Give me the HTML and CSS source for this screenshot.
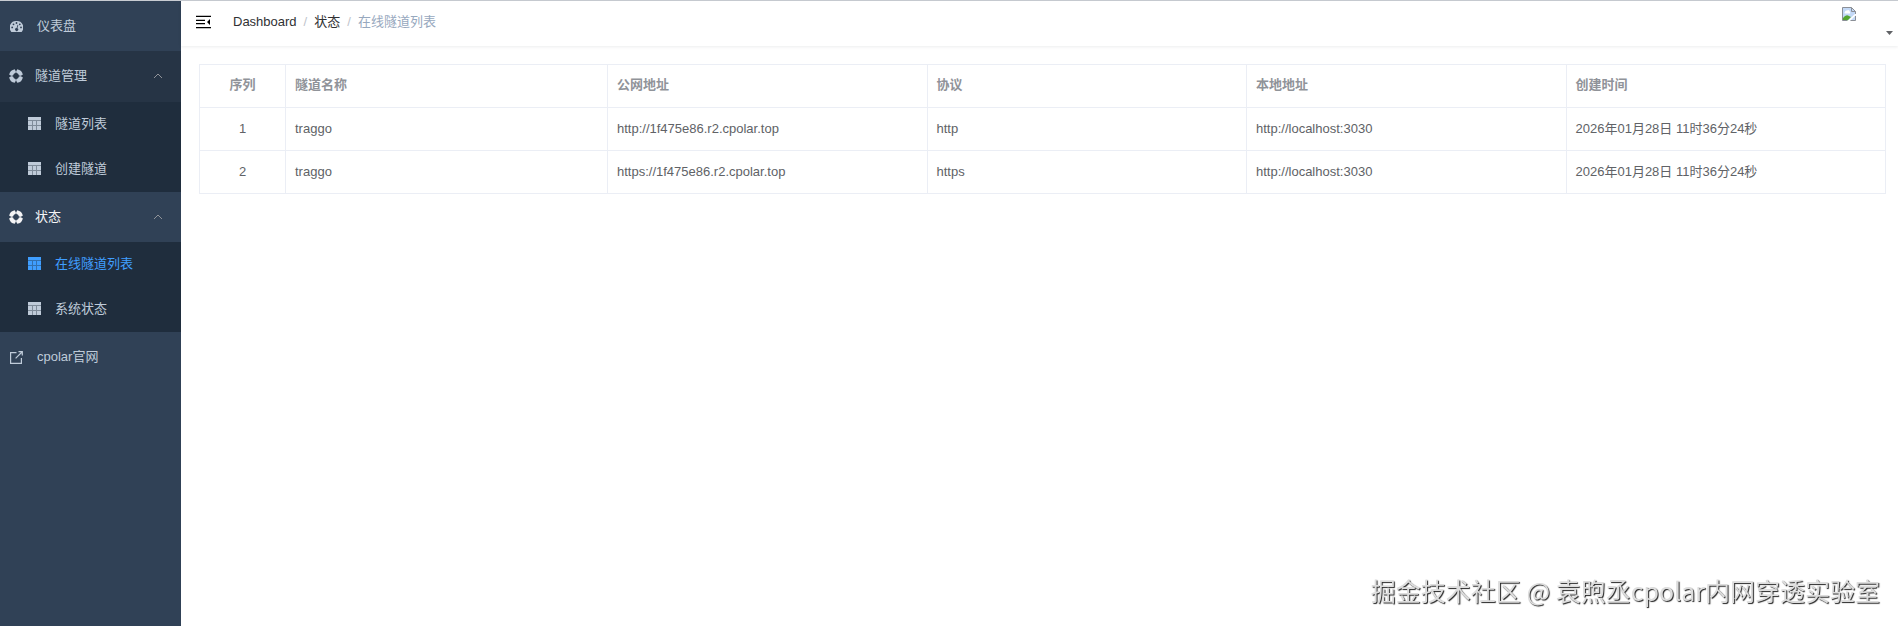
FILE: index.html
```
<!DOCTYPE html>
<html lang="zh-CN">
	<head>
		<meta charset="utf-8">
		<title>在线隧道列表 - cpolar</title>
		<link rel="stylesheet" href="styles.css">
	</head>
	<body>
		<svg class="symbols" aria-hidden="true">
			<symbol id="i-table" viewBox="0 0 13 13">
				<path d="M0 0h13v3H0zM0 4h4v4H0zM5 4h3v4H5zM9 4h4v4H9zM0 9h4v4H0zM5 9h3v4H5zM9 9h4v4H9z" />
				<path d="M0 0h13v13H0z" opacity=".6" />
			</symbol>
			<symbol id="i-ring" viewBox="0 0 14 14">
				<path fill="none" stroke="currentColor" stroke-width="4" d="M7.8 2.100A5 5 0 0 1 11.900 6.200M11.900 7.800A5 5 0 0 1 7.800 11.900M6.200 11.900A5 5 0 0 1 2.100 7.800M2.100 6.200A5 5 0 0 1 6.200 2.100" />
				<circle cx="7" cy="7" r="4.600" fill="none" stroke="currentColor" stroke-width="2" opacity=".75" />
			</symbol>
			<symbol id="i-arrow" viewBox="0 0 10 6">
				<path fill="none" stroke="currentColor" d="M1 5l4-4 4 4" />
			</symbol>
		</svg>
		<div class="app">
			<nav class="sidebar">
				<a class="item" href="#">
					<svg class="icon" viewBox="0 0 13 13">
						<path fill-rule="evenodd" d="M6.500 1A6.500 6.500 0 0 0 1 11.500Q1.300 12 1.800 12H11.200Q11.700 12 12 11.500A6.500 6.500 0 0 0 6.500 1zM2.200 6.500a.9.9 0 1 1 0 1.800a.9.9 0 0 1 0-1.800zM3.500 3.400a.9.9 0 1 1 0 1.800a.9.9 0 0 1 0-1.800zM6.500 2.100a.9.9 0 1 1 0 1.800a.9.9 0 0 1 0-1.800zM9.800 3.400a.9.9 0 1 1 0 1.800a.9.9 0 0 1 0-1.800zM11 6.500a.9.9 0 1 1 0 1.800a.9.9 0 0 1 0-1.800zM7.600 4.800L8.300 5L7.400 8.200a1.500 1.500 0 1 1-.8-.2z" />
					</svg>
					<span>仪表盘</span>
				</a>
				<button class="item group" type="button">
					<svg class="icon"><use href="#i-ring" /></svg>
					<span>隧道管理</span>
					<svg class="arrow"><use href="#i-arrow" /></svg>
				</button>
				<div class="submenu">
					<a class="subitem" href="#"><svg class="icon"><use href="#i-table" /></svg><span>隧道列表</span></a>
					<a class="subitem" href="#"><svg class="icon"><use href="#i-table" /></svg><span>创建隧道</span></a>
				</div>
				<button class="item group open" type="button">
					<svg class="icon"><use href="#i-ring" /></svg>
					<span>状态</span>
					<svg class="arrow"><use href="#i-arrow" /></svg>
				</button>
				<div class="submenu">
					<a class="subitem active" href="#"><svg class="icon"><use href="#i-table" /></svg><span>在线隧道列表</span></a>
					<a class="subitem" href="#"><svg class="icon"><use href="#i-table" /></svg><span>系统状态</span></a>
				</div>
				<a class="item" href="#">
					<svg class="icon" viewBox="0 0 13 13">
						<path fill="none" stroke="currentColor" stroke-width="1.200" d="M6.500 1.600H.6v10.800h10.800V7M8.500 .7h3.800v3.800M12 1L5.600 7.400" />
					</svg>
					<span>cpolar官网</span>
				</a>
			</nav>
			<div class="main">
				<header class="navbar">
					<button class="hamburger" type="button" aria-label="menu">
						<svg viewBox="0 0 15 14">
							<path d="M0 1h15v1H0zM0 5h9v1H0zM0 8h9v1H0zM0 12h15v1H0zM14 4v6l-3-3z" />
							<path d="M0 0h15v14H0z" fill="none" />
							<path d="M0 1h15M0 5h9M0 9h9M0 13h15" stroke="currentColor" opacity=".5" />
						</svg>
					</button>
					<nav class="breadcrumb">
						<a href="#">Dashboard</a>
						<span class="sep">/</span>
						<a href="#">状态</a>
						<span class="sep">/</span>
						<span class="current">在线隧道列表</span>
					</nav>
					<button class="avatar" type="button" aria-label="user">
						<svg class="picture" viewBox="0 0 16 16">
							<path fill="#c3d9f7" d="M1.500 1.500h9l4 4v9h-13z" />
							<path fill="#fff" d="M4 6q0-2 2-1.500Q8 3 9 6q1 1.500-1 1.500H4q-1.500-.5 0-1.500z" />
							<path fill="#55a630" d="M2 14.500V12q3-4 6-2l2 1-3.500 3.500z" />
							<path fill="#fff" d="M15 7v2l-6.500 6.500H6z" />
							<path fill="none" stroke="#8b8f96" d="M6 14.500H1.500v-13h9l4 4V8M10.500 1.500v4h4M9.500 14.500h5V10" />
						</svg>
						<svg class="caret" viewBox="0 0 7 4"><path d="M0 0h7L3.500 4z" /></svg>
					</button>
				</header>
				<main class="content">
					<table class="tunnels">
						<thead>
							<tr>
								<th class="index">序列</th>
								<th class="name">隧道名称</th>
								<th>公网地址</th>
								<th>协议</th>
								<th>本地地址</th>
								<th>创建时间</th>
							</tr>
						</thead>
						<tbody>
							<tr>
								<td class="index">1</td>
								<td>traggo</td>
								<td>http://1f475e86.r2.cpolar.top</td>
								<td>http</td>
								<td>http://localhost:3030</td>
								<td>2026年01月28日 11时36分24秒</td>
							</tr>
							<tr>
								<td class="index">2</td>
								<td>traggo</td>
								<td>https://1f475e86.r2.cpolar.top</td>
								<td>https</td>
								<td>http://localhost:3030</td>
								<td>2026年01月28日 11时36分24秒</td>
							</tr>
						</tbody>
					</table>
				</main>
			</div>
		</div>
		<div class="watermark">掘金技术社区 @ 袁煦丞cpolar内网穿透实验室</div>
	</body>
</html>
```
FILE: styles.css
```
*
{
	box-sizing: border-box;
}

body
{
	margin: 0;
	font: 13px/20px "Liberation Sans", "Noto Sans CJK SC", sans-serif;
	color: #606266;
	background: #ffffff;
}

a
{
	color: inherit;
	text-decoration: none;
}

button
{
	border: 0;
	padding: 0;
	background: none;
	color: inherit;
	font: inherit;
	text-align: left;
	cursor: pointer;
}

svg
{
	display: block;
	fill: currentColor;
	flex: none;
}

.symbols
{
	display: none;
}

.app
{
	display: flex;
	min-height: 100vh;
	border-top: 1px solid #c8ccd2;
}

/* sidebar */
.sidebar
{
	width: 181px;
	flex: none;
	background: #304156;
	color: #bfcbd9;
}

.item, .subitem
{
	display: flex;
	align-items: center;
	width: 100%;
	height: 50px;
	padding: 0 18px 0 10px;
	gap: 14px;
}

.group
{
	height: 51px;
	padding-left: 9px;
	padding-bottom: 1px;
	gap: 12px;
	background: #263445;
}

.open
{
	height: 50px;
	padding-bottom: 0;
	background: #304156;
	color: #f4f4f5;
}

.submenu
{
	background: #1f2d3d;
}

.subitem
{
	height: 45px;
	padding-left: 28px;
	padding-bottom: 2px;
}

.active
{
	color: #409eff;
}

.icon
{
	width: 13px;
	height: 13px;
}

.group .icon
{
	width: 14px;
	height: 14px;
}

.arrow
{
	width: 10px;
	height: 6px;
	margin-left: auto;
	color: #909399;
}

/* content */
.main
{
	flex: 1;
	min-width: 0;
}

.navbar
{
	display: flex;
	height: 45px;
	padding: 0 5px 3px 15px;
	box-shadow: 0 1px 3px rgba(0, 21, 41, .08);
}

.hamburger
{
	margin-right: 22px;
	color: #000000;
}

.hamburger svg
{
	width: 15px;
	height: 14px;
}

.breadcrumb
{
	display: flex;
	align-items: center;
	gap: 7px;
	color: #303133;
}

.sep
{
	color: #c0c4cc;
}

.current
{
	color: #97a8be;
}

.avatar
{
	display: flex;
	align-items: flex-start;
	gap: 29px;
	padding-top: 5px;
	margin-left: auto;
}

.picture
{
	width: 16px;
	height: 16px;
}

.caret
{
	width: 7px;
	height: 4px;
	align-self: center;
	margin-top: 17px;
}

.content
{
	padding: 18px 12px 18px 18px;
}

.tunnels
{
	width: 100%;
	table-layout: fixed;
	border-collapse: collapse;
}

.tunnels th, .tunnels td
{
	height: 43px;
	padding: 0 9px;
	border: 1px solid #ebeef5;
	text-align: left;
}

.tunnels th
{
	padding-bottom: 2px;
	color: #909399;
}

.tunnels .index
{
	width: 86px;
	text-align: center;
}

.tunnels .name
{
	width: 322px;
}

.watermark
{
	position: fixed;
	right: 18px;
	bottom: 18px;
	font: 25px/36px "Noto Sans CJK SC", sans-serif;
	color: #dddddd;
	text-shadow: 1px 1px 1px #222222;
}
```
